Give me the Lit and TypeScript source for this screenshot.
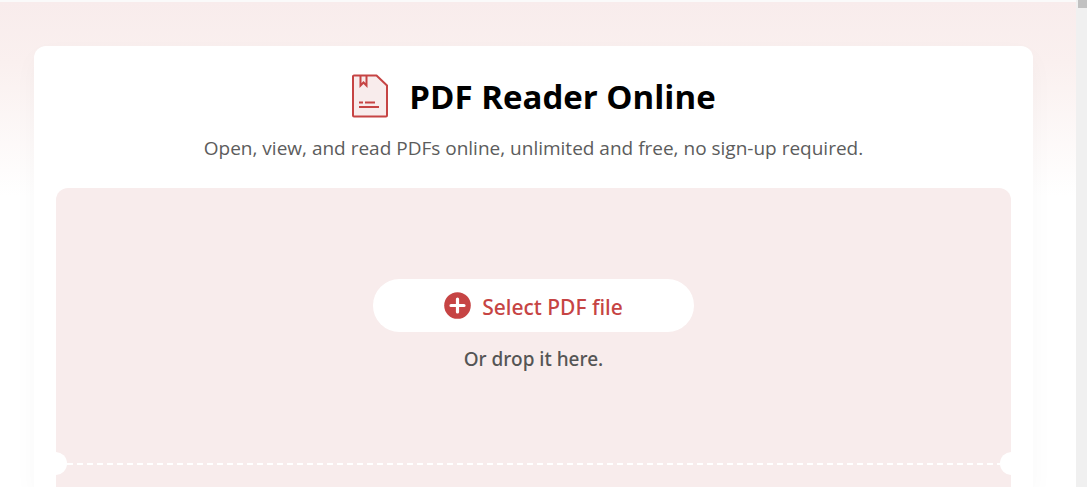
import { LitElement, html, css } from "lit";
import { customElement } from "lit/decorators.js";

@customElement("upload-panel")
export class UploadPanel extends LitElement {
  static styles = css`
    :host {
      display: flex;
      flex-direction: column;
      flex: 1 0 auto;
      border-radius: 12px 12px 0 0;
      background: #f8ecec;
      overflow: hidden;
    }
    .drop {
      display: flex;
      flex-direction: column;
      align-items: center;
      gap: 11px;
      padding: 91px 20px 77px;
    }
    .select {
      display: flex;
      align-items: center;
      justify-content: center;
      gap: 11px;
      width: 321px;
      max-width: 100%;
      height: 53px;
      padding: 0;
      border: 0;
      border-radius: 27px;
      background: #fff;
      color: #c64444;
      font: 500 21px/30px "Segoe UI", "Noto Sans", sans-serif;
      cursor: pointer;
    }
    .label {
      padding-top: 2px;
    }
    .plus {
      width: 27px;
      height: 27px;
      flex: none;
    }
    .hint {
      margin: 0;
      color: #555;
      font-size: 19px;
      line-height: 32px;
      font-weight: 500;
    }
    .tear {
      display: flex;
      align-items: center;
      justify-content: space-between;
      margin: 0 -12px;
    }
    .notch {
      width: 23px;
      height: 23px;
      border-radius: 50%;
      background: #fff;
      flex: none;
    }
    .dashes {
      flex: 1;
      height: 2px;
      background: repeating-linear-gradient(to right, #fff 0 6px, transparent 6px 10px);
    }
  `;

  render() {
    return html`
      <div class="drop">
        <button class="select" type="button">
          <svg class="plus" viewBox="0 0 27 27" aria-hidden="true">
            <circle cx="13.5" cy="13.5" r="13.3" fill="#c64444" />
            <path d="M13.5 7v13M7 13.5h13" stroke="#fff" stroke-width="3.2" stroke-linecap="round" />
          </svg>
          <span class="label">Select PDF file</span>
        </button>
        <p class="hint">Or drop it here.</p>
      </div>
      <div class="tear">
        <span class="notch"></span>
        <span class="dashes"></span>
        <span class="notch"></span>
      </div>
    `;
  }
}

@customElement("app-root")
export class AppRoot extends LitElement {
  static styles = css`
    :host {
      display: grid;
      grid-template-columns: 1fr 11px;
      height: 100vh;
      overflow: hidden;
      font-family: "Segoe UI", "Noto Sans", sans-serif;
    }
    .page {
      display: flex;
      flex-direction: column;
      min-width: 0;
      border-top: 2px solid #fafafa;
      padding: 44px 43px 0 34px;
      background: linear-gradient(#f8ecec, #faf0ef 60px, #fff 194px) no-repeat #fff;
    }
    .card {
      display: flex;
      flex-direction: column;
      flex: 1 0 auto;
      padding: 22px 22px 0;
      border-radius: 12px 12px 0 0;
      background: #fff;
      box-shadow: 0 10px 24px rgba(0, 0, 0, 0.03);
    }
    .heading {
      display: flex;
      align-items: center;
      justify-content: center;
      gap: 20px;
      height: 56px;
    }
    .doc {
      width: 38px;
      height: 44px;
      flex: none;
    }
    h1 {
      margin: 0;
      padding-top: 2px;
      color: #000;
      font-family: "Segoe UI", "Open Sans", sans-serif;
      font-size: 33px;
      line-height: 48px;
      font-weight: 700;
    }
    .lead {
      margin: 0 0 24px;
      padding-top: 8px;
      color: #5c5c5c;
      font-family: "Segoe UI", "Open Sans", sans-serif;
      font-size: 19px;
      line-height: 32px;
      text-align: center;
    }
    .scroll {
      display: flex;
      justify-content: flex-end;
      background: #f0f0f0;
    }
    .thumb {
      width: 9px;
      height: 8px;
      background: #c1c1c1;
    }
  `;

  render() {
    return html`
      <main class="page">
        <section class="card">
          <header class="heading">
            <svg class="doc" viewBox="0 0 38 44" fill="none" stroke="#c64444" stroke-width="2" aria-hidden="true">
              <path d="M3 1.5h22.500L36 11.500v30a1 1 0 0 1-1 1H3a1 1 0 0 1-1-1v-39a1 1 0 0 1 1-1z" fill="#f8ecec" stroke-linejoin="round" />
              <path d="M9.500 1.500v10l3-3 3 3v-10" />
              <path d="M8 28.500h4M14 28.500h10M8 33h20" />
            </svg>
            <h1>PDF Reader Online</h1>
          </header>
          <p class="lead">Open, view, and read PDFs online, unlimited and free, no sign-up required.</p>
          <upload-panel></upload-panel>
        </section>
      </main>
      <div class="scroll" aria-hidden="true"><span class="thumb"></span></div>
    `;
  }
}
